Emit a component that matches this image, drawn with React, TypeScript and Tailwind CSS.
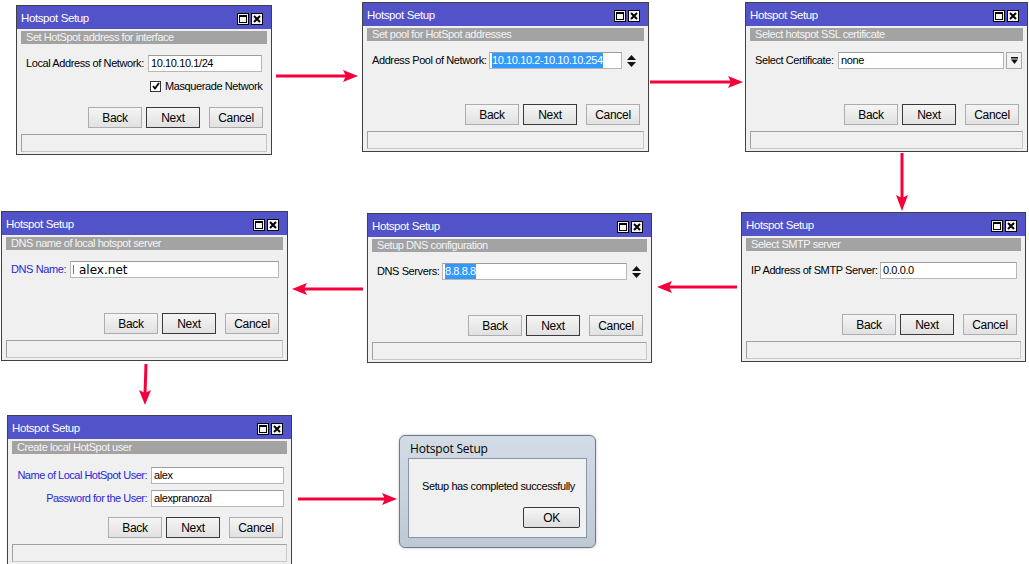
import React from 'react';

const txt = "font-['Liberation_Sans',Arial,sans-serif] text-[11px] tracking-[-0.4px]";

function TitleButtons() {
  return (
    <div className="flex gap-[2px] pt-[2px]">
      <div className="w-[12px] h-[12px] border border-black bg-[#f4f4f4] flex items-center justify-center">
        <div className="w-[8px] h-[8px] border border-black border-t-2" />
      </div>
      <div className="w-[12px] h-[12px] border border-black bg-[#f4f4f4] flex items-center justify-center">
        <svg width="8" height="8" viewBox="0 0 8 8">
          <path d="M1 1 L7 7 M7 1 L1 7" stroke="black" strokeWidth="2" />
        </svg>
      </div>
    </div>
  );
}

function Btn({ label, def, className = '' }: { label: string; def?: boolean; className?: string }) {
  return (
    <div
      className={`w-[54px] h-[21px] flex items-center justify-center border bg-linear-to-b from-[#f5f5f5] to-[#e1e1e1] text-[12px] tracking-[-0.3px] text-black ${def ? 'border-[#3a3a3a]' : 'border-[#adadad]'} ${className}`}
    >
      {label}
    </div>
  );
}

function Win({ pos, sub, children }: { pos: string; sub: string; children: React.ReactNode }) {
  return (
    <div className={`absolute ${pos} h-[150px] flex flex-col border border-[#404040] bg-[#f0f0f0] ${txt}`}>
      <div className="h-[23px] shrink-0 bg-[#5252c9] flex items-center justify-between pl-[4px] pr-[8px]">
        <span className="text-white text-[11.5px] pt-[2px]">Hotspot Setup</span>
        <TitleButtons />
      </div>
      <div className="flex-1 flex flex-col px-[4px] pt-[2px]">
        <div className="h-[13px] shrink-0 bg-[#a3a3a3] text-[#f4f4f4] tracking-[-0.45px] leading-[13px] pl-[5px] whitespace-nowrap">{sub}</div>
        <div className="flex-1 flex flex-col pt-[11px] pl-[5px]">{children}</div>
        <div className="flex justify-end pr-[4px]">
          <Btn label="Back" />
          <Btn label="Next" def className="ml-[4px]" />
          <Btn label="Cancel" className="ml-[9px]" />
        </div>
        <div className="h-[18px] shrink-0 mt-[6px] mb-[2px] border border-[#c8c8c8] border-t-[#a0a0a0] border-l-[#a0a0a0]" />
      </div>
    </div>
  );
}

function Input({ w, children }: { w: string; children?: React.ReactNode }) {
  return (
    <div className={`${w} h-[17px] shrink-0 border border-[#b7b7b7] border-t-[#9c9c9c] bg-white flex items-center pl-[2px] text-black whitespace-nowrap overflow-hidden`}>
      {children}
    </div>
  );
}

function Spinner() {
  return (
    <svg width="9" height="12" viewBox="0 0 9 12" className="ml-[5px]">
      <polygon points="0,5 4.5,0 9,5" fill="#111" />
      <polygon points="0,7 4.5,12 9,7" fill="#111" />
    </svg>
  );
}

function Arrows() {
  const c = '#f4003a';
  return (
    <svg className="absolute inset-0 pointer-events-none" width="1029" height="564" viewBox="0 0 1029 564">
      <g stroke={c} strokeWidth="3" fill="none">
        <line x1="276" y1="76" x2="347" y2="76" />
        <line x1="650" y1="82" x2="731" y2="82" />
        <line x1="902" y1="153" x2="902" y2="199" />
        <line x1="737" y1="287" x2="668" y2="287" />
        <line x1="363" y1="289" x2="303" y2="289" />
        <line x1="146" y1="364" x2="145" y2="394" />
        <line x1="298" y1="499" x2="386" y2="499" />
      </g>
      <g fill={c}>
        <polygon points="343,70 358,76 343,82 346,76" />
        <polygon points="728,76 743,82 728,88 731,82" />
        <polygon points="896,195 902,211 908,195 902,198" />
        <polygon points="672,281 657,287 672,293 669,287" />
        <polygon points="307,283 292,289 307,295 304,289" />
        <polygon points="139,390 145,405 151,390 145,393" />
        <polygon points="382,493 397,499 382,505 385,499" />
      </g>
    </svg>
  );
}

export default function App() {
  return (
    <div className="relative w-[1029px] h-[564px] bg-white overflow-hidden">
      <Win pos="left-[16px] top-[5px] w-[256px]" sub="Set HotSpot address for interface">
        <div className="flex items-center">
          <span className="w-[122px] shrink-0 whitespace-nowrap text-black">Local Address of Network:</span>
          <Input w="w-[114px]">10.10.10.1/24</Input>
        </div>
        <div className="flex items-center mt-[6px] ml-[124px] text-black">
          <div className="w-[11px] h-[11px] border border-[#333] bg-white flex items-center justify-center">
            <svg width="8" height="8" viewBox="0 0 8 8">
              <path d="M1 4 L3 6.5 L7 1" stroke="black" strokeWidth="1.8" fill="none" />
            </svg>
          </div>
          <span className="ml-[4px] whitespace-nowrap">Masquerade Network</span>
        </div>
      </Win>

      <Win pos="left-[362px] top-[2px] w-[287px]" sub="Set pool for HotSpot addresses">
        <div className="flex items-center">
          <span className="w-[117px] shrink-0 whitespace-nowrap text-black">Address Pool of Network:</span>
          <Input w="w-[133px]">
            <span className="bg-[#3399ff] text-white">10.10.10.2-10.10.10.254</span>
          </Input>
          <Spinner />
        </div>
      </Win>

      <Win pos="left-[745px] top-[2px] w-[283px]" sub="Select hotspot SSL certificate">
        <div className="flex items-center">
          <span className="w-[83px] shrink-0 whitespace-nowrap text-black">Select Certificate:</span>
          <Input w="w-[166px]">none</Input>
          <div className="ml-[2px] w-[16px] h-[17px] border border-[#a8a8a8] bg-[#f2f2f2] flex items-center justify-center">
            <svg width="7" height="7" viewBox="0 0 7 7">
              <rect x="0" y="0" width="7" height="1.5" fill="#111" />
              <polygon points="0,2.5 7,2.5 3.5,7" fill="#111" />
            </svg>
          </div>
        </div>
      </Win>

      <Win pos="left-[1px] top-[211px] w-[287px]" sub="DNS name of local hotspot server">
        <div className="flex items-center">
          <span className="w-[59px] shrink-0 whitespace-nowrap text-[#2727d8]">DNS Name:</span>
          <Input w="w-[209px]">
            <span className="w-[1px] h-[9px] bg-[#777] mr-[5px]" />
            <span className="font-['DejaVu_Sans',sans-serif] text-[12px] tracking-normal">alex.net</span>
          </Input>
        </div>
      </Win>

      <Win pos="left-[367px] top-[213px] w-[285px]" sub="Setup DNS configuration">
        <div className="flex items-center">
          <span className="w-[65px] shrink-0 whitespace-nowrap text-black">DNS Servers:</span>
          <Input w="w-[185px]">
            <span className="bg-[#3399ff] text-white">8.8.8.8</span>
          </Input>
          <Spinner />
        </div>
      </Win>

      <Win pos="left-[741px] top-[212px] w-[285px]" sub="Select SMTP server">
        <div className="flex items-center">
          <span className="w-[129px] shrink-0 whitespace-nowrap text-black">IP Address of SMTP Server:</span>
          <Input w="w-[137px]">0.0.0.0</Input>
        </div>
      </Win>

      <Win pos="left-[7px] top-[415px] w-[285px]" sub="Create local HotSpot user">
        <div className="flex flex-col gap-[6px] pt-[2px]">
          <div className="flex items-center">
            <span className="w-[134px] shrink-0 whitespace-nowrap pr-[4px] text-right tracking-[-0.5px] text-[#2727d8]">Name of Local HotSpot User:</span>
            <Input w="w-[133px]">alex</Input>
          </div>
          <div className="flex items-center">
            <span className="w-[134px] shrink-0 whitespace-nowrap pr-[4px] text-right tracking-[-0.5px] text-[#2727d8]">Password for the User:</span>
            <Input w="w-[133px]">alexpranozal</Input>
          </div>
        </div>
      </Win>

      <div className={`absolute left-[399px] top-[435px] w-[197px] h-[113px] flex flex-col rounded-[6px] border border-[#6d7b8b] bg-linear-to-b from-[#d3dce6] to-[#bfc9d4] px-[8px] pb-[9px] shadow-[0_0_3px_rgba(0,0,0,0.25)] ${txt}`}>
        <div className="h-[22px] shrink-0 flex items-end pl-[2px] font-['Open_Sans',sans-serif] text-[12px] tracking-[-0.2px] text-black">Hotspot Setup</div>
        <div className="flex-1 flex flex-col border border-[#8797a8] bg-[#f0f0f0]">
          <div className="pt-[19px] pl-[13px] whitespace-nowrap text-black">Setup has completed successfully</div>
          <div className="mt-auto flex justify-end pr-[6px] pb-[9px]">
            <div className="w-[57px] h-[21px] flex items-center justify-center border border-[#3a3a3a] rounded-[2px] bg-linear-to-b from-[#f6f6f6] to-[#dedede] text-[12px] text-black">
              OK
            </div>
          </div>
        </div>
      </div>

      <Arrows />
    </div>
  );
}
